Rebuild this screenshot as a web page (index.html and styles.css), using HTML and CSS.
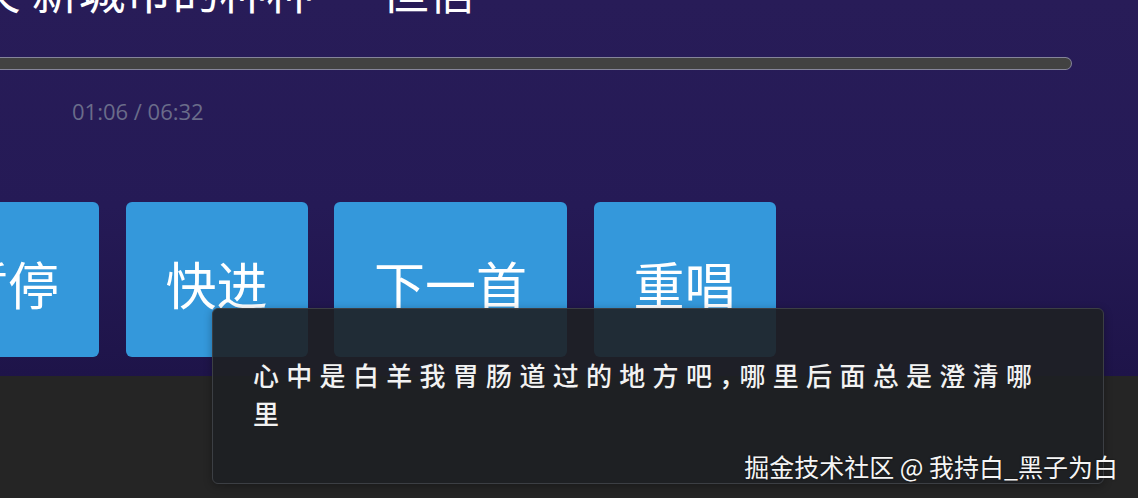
FILE: index.html
```html
<!DOCTYPE html>
<html lang="zh-CN">
<head>
<meta charset="utf-8">
<title>音乐播放器</title>
<link rel="stylesheet" href="styles.css">
</head>
<body>
  <section class="player">
    <div class="content">
      <h1 class="title">关 新城市的种种 — 但信</h1>
      <div class="progress"></div>
      <div class="time">01:06 / 06:32</div>
      <div class="controls">
        <button class="btn">暂停</button>
        <button class="btn">快进</button>
        <button class="btn">下一首</button>
        <button class="btn">重唱</button>
      </div>
    </div>
  </section>
  <section class="footer"></section>
  <div class="lyric">心中是白羊我胃肠道过的地方吧，哪里后面总是澄清哪里</div>
  <div class="watermark">掘金技术社区 @ 我持白_黑子为白</div>
</body>
</html>
```
FILE: styles.css
```css
* { box-sizing: border-box; }
html, body { margin: 0; padding: 0; }
body {
  width: 1138px;
  height: 498px;
  overflow: hidden;
  position: relative;
  background: #252525;
  font-family: "Noto Sans CJK SC", "Noto Sans", sans-serif;
}
.player {
  height: 376px;
  overflow: hidden;
  background: linear-gradient(180deg, #281c58 0%, #251a56 55%, #1e1449 100%);
}
.content {
  margin-left: -83px;
}
.title {
  margin: -35px 0 0;
  padding-left: 57px;
  font-size: 47px;
  line-height: 47px;
  font-weight: 400;
  color: #ffffff;
  white-space: nowrap;
}
.progress {
  margin: 45px 66px 0 0;
  height: 13px;
  background: #424242;
  border: 1.5px solid #85859a;
  border-left: none;
  border-radius: 0 7px 7px 0;
}
.time {
  margin: 30px 0 0 155px;
  font-family: "Open Sans", sans-serif;
  font-size: 22px;
  line-height: 22px;
  color: #6a6c8a;
}
.controls {
  display: flex;
  gap: 26.5px;
  margin-top: 80px;
}
.btn {
  height: 155px;
  padding: 6px 40px 0;
  border: none;
  border-radius: 6px;
  background: #3498db;
  color: #ffffff;
  font-family: "Noto Sans CJK SC", sans-serif;
  font-size: 51px;
  display: flex;
  align-items: center;
  justify-content: center;
  white-space: nowrap;
}
.footer {
  height: 122px;
}
.lyric {
  position: absolute;
  left: 212px;
  top: 308px;
  width: 892px;
  padding: 47px 40px 51px;
  background: rgba(30, 32, 35, 0.9);
  border: 1px solid #3c3f44;
  border-radius: 6px;
  box-shadow: 0 2px 8px rgba(0, 0, 0, 0.3);
  color: #f2f2f2;
  font-size: 26px;
  line-height: 38px;
  letter-spacing: 7.3px;
  font-weight: 500;
  font-feature-settings: "halt";
}
.watermark {
  position: absolute;
  right: 20px;
  bottom: 16px;
  font-size: 25px;
  line-height: 32px;
  color: #f5f5f5;
  text-shadow: 0 0 2px rgba(0, 0, 0, 0.6);
  white-space: nowrap;
}
```
